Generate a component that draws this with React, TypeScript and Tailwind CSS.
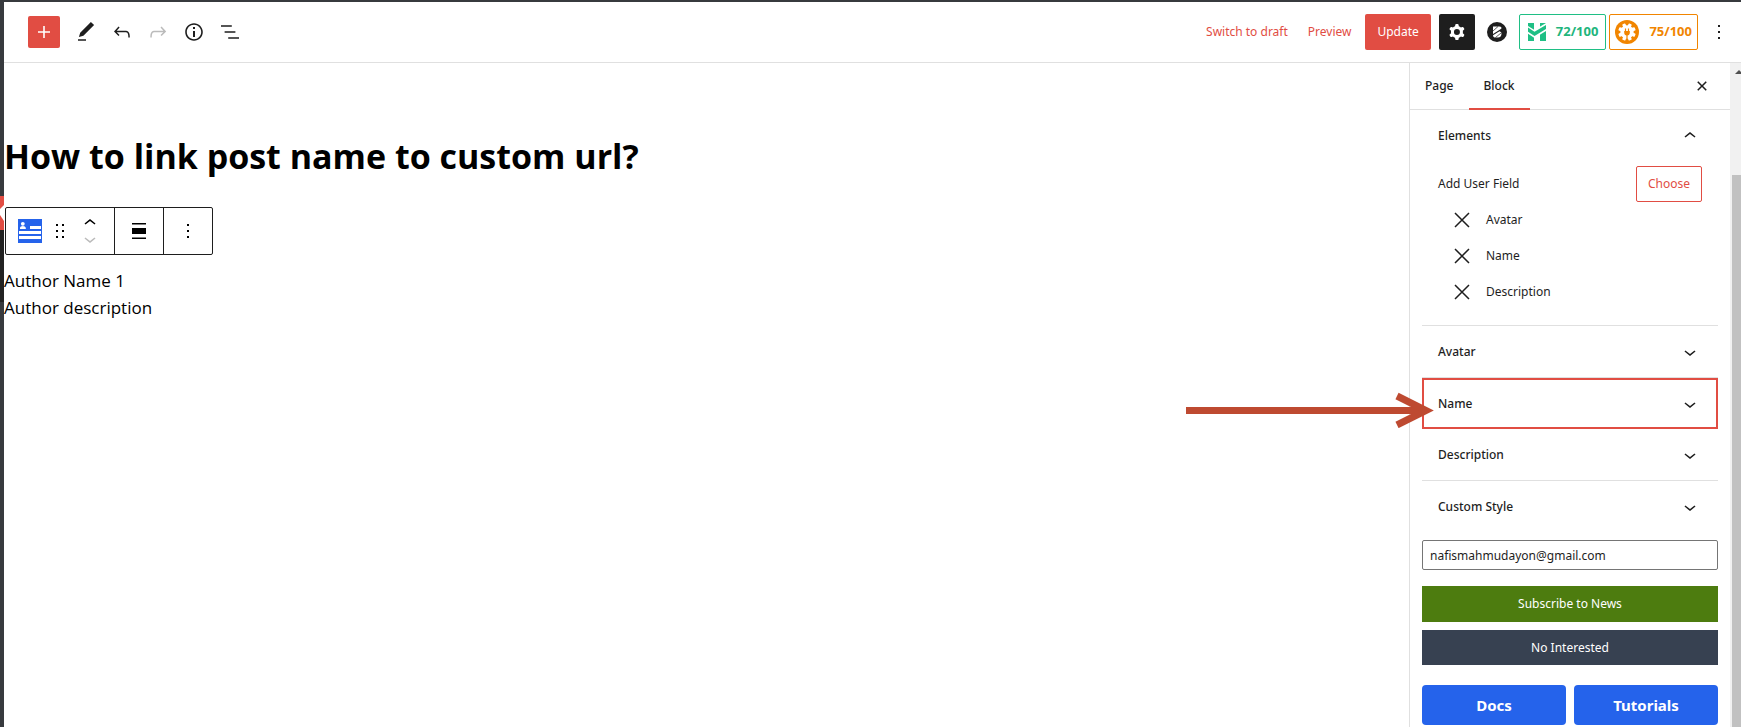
import type { ReactNode } from "react";

const ICONS = {
  plus: "M18 11.2h-5.2V6h-1.6v5.2H6v1.6h5.2V18h1.6v-5.2H18z",
  edit: "M20.1 5.1L16.9 2 6.2 12.7l-1.3 4.4 4.5-1.3L20.1 5.1zM4 20.8h8v-1.5H4v1.5z",
  undo: "M18.3 11.7c-.6-.6-1.4-.9-2.3-.9H6.7l2.9-3.3-1.1-1-4.5 5L8.5 16l1-1-2.7-2.7H16c.5 0 .9.2 1.3.5 1 1 1 3.4 1 4.5v.3h1.5v-.2c0-1.5 0-4.3-1.5-5.7z",
  redo: "M15.6 6.5l-1.1 1 2.9 3.3H8c-.9 0-1.7.3-2.3.9-1.4 1.5-1.4 4.2-1.4 5.6v.2h1.5v-.3c0-1.1 0-3.5 1-4.5.3-.3.7-.5 1.3-.5h9.2L14.5 15l1.1 1.1 4.6-4.6-4.6-5z",
  info: "M12 3.2c-4.8 0-8.8 3.9-8.8 8.8 0 4.8 3.9 8.8 8.8 8.8 4.8 0 8.8-3.9 8.8-8.8 0-4.8-4-8.8-8.8-8.8zm0 16c-4 0-7.2-3.3-7.2-7.2C4.8 8 8 4.8 12 4.8s7.2 3.3 7.2 7.2c0 4-3.2 7.2-7.2 7.2zM11 17h2v-6h-2v6zm0-8h2V7h-2v2z",
  list: "M13.8 5.2H3v1.5h10.8V5.2zm-3.6 12v1.5H21v-1.5H10.2zm7.2-6H6.6v1.5h10.8v-1.5z",
  cog: "M10.289 4.836A1 1 0 0111.275 4h1.306a1 1 0 01.987.836l.244 1.466c.787.26 1.503.679 2.108 1.218l1.393-.522a1 1 0 011.216.437l.653 1.13a1 1 0 01-.23 1.273l-1.148.944a6.025 6.025 0 010 2.435l1.149.946a1 1 0 01.23 1.272l-.653 1.13a1 1 0 01-1.216.437l-1.394-.522c-.605.54-1.32.958-2.108 1.218l-.244 1.466a1 1 0 01-.987.836h-1.306a1 1 0 01-.986-.836l-.244-1.466a5.995 5.995 0 01-2.108-1.218l-1.394.522a1 1 0 01-1.217-.436l-.653-1.131a1 1 0 01.23-1.272l1.149-.946a6.026 6.026 0 010-2.435l-1.148-.944a1 1 0 01-.23-1.272l.653-1.131a1 1 0 011.217-.437l1.393.522a5.994 5.994 0 012.108-1.218l.244-1.466zM14.929 12a3 3 0 11-6 0 3 3 0 016 0z",
  more: "M13 19h-2v-2h2v2zm0-6h-2v-2h2v2zm0-6h-2V5h2v2z",
  close: "M12 13.06l3.712 3.713 1.061-1.06L13.061 12l3.712-3.712-1.06-1.06L12 10.938 8.288 7.227l-1.061 1.06L10.939 12l-3.712 3.712 1.06 1.061L12 13.061z",
  up: "M6.5 12.4L12 8l5.5 4.4-.9 1.2L12 10l-4.5 3.6-1-1.2z",
  down: "M17.5 11.6L12 16l-5.5-4.4.9-1.2L12 14l4.5-3.6 1 1.2z",
  drag: "M8 7h2V5H8v2zm0 6h2v-2H8v2zm0 6h2v-2H8v2zm6-14v2h2V5h-2zm0 8h2v-2h-2v2zm0 6h2v-2h-2v2z",
  align: "M5 4h14v1.6H5zM5 9h14v6H5zM5 18.4h14V20H5z",
};

function Icon({ name, className = "size-6" }: { name: keyof typeof ICONS; className?: string }) {
  return (
    <svg viewBox="0 0 24 24" className={`${className} shrink-0`} fill="currentColor" fillRule="evenodd" aria-hidden="true">
      <path d={ICONS[name]} />
    </svg>
  );
}

function ToolButton({ label, icon, disabled }: { label: string; icon: keyof typeof ICONS; disabled?: boolean }) {
  return (
    <button type="button" aria-label={label} disabled={disabled} className="flex size-9 items-center justify-center text-[#1e1e1e] disabled:text-[#bbb]">
      <Icon name={icon} />
    </button>
  );
}

function BlocksLogo() {
  return (
    <svg viewBox="0 0 20 20" className="size-5" aria-hidden="true">
      <circle cx="10" cy="10" r="10" fill="#1e1e1e" />
      <path d="M6 4.500H12.500Q14.800 4.500 14.300 6.800L6 12Z" fill="#fff" />
      <path d="M6 13.200L12.500 9.200Q14.800 9.800 14.500 12Q14 15.500 11 15.500H7.500Q6 15.200 6 13.200Z" fill="#fff" />
      <path d="M6 9L11 4.500M8.500 15.500L14 11" stroke="#1e1e1e" strokeWidth=".7" />
    </svg>
  );
}

function SeoLogo() {
  return (
    <svg viewBox="0 0 18 18" className="size-[18px]" aria-hidden="true" fill="#1fbf85">
      <path d="M0 0H6V18H0ZM12 0H18V18H12Z" />
      <path d="M-1 2.500L6.500 7L19 -.5V7.500L6.500 15L-1 10Z" fill="#fff" />
      <path d="M0 4.500L6.500 8.800L18 2V6L6.500 13L0 8.800Z" />
    </svg>
  );
}

function PlugLogo() {
  return (
    <svg viewBox="0 0 24 24" className="size-6" aria-hidden="true">
      <circle cx="12" cy="12" r="12" fill="#f18500" />
      <g fill="#fff">
        <circle cx="12" cy="12" r="6.700" />
        {[0, 45, 90, 135].map((angle) => (
          <rect key={angle} x="10.300" y="3.200" width="3.400" height="17.600" rx=".8" transform={`rotate(${angle + 22.5} 12 12)`} />
        ))}
      </g>
      <path d="M10.500 8.500v3M13.500 8.500v3M12 14v7" stroke="#f18500" strokeWidth="1.200" />
      <path d="M9.200 11h5.600v1.500a2.800 3 0 0 1-5.600 0z" fill="#f18500" />
    </svg>
  );
}

function BlockTypeIcon() {
  return (
    <svg viewBox="0 0 24 24" className="size-6" aria-hidden="true">
      <path fill="#2563eb" d="M0 0h24v24H0z" />
      <g fill="#fff">
        <circle cx="4.800" cy="4.800" r="1.900" />
        <path d="M2 10V8.800Q2 7 4.800 7T7.800 8.800V10ZM12 7h11v3H12zM1 12h22v3H1zM1 17h22v3H1z" />
      </g>
    </svg>
  );
}

function Header() {
  return (
    <header className="flex h-[61px] shrink-0 items-center justify-between border-b border-[#e0e0e0] pr-2.5 pl-6">
      <div className="flex items-center">
        <button type="button" aria-label="Toggle block inserter" className="mr-2 flex size-8 items-center justify-center rounded-xs bg-[#e14d43] text-white">
          <Icon name="plus" />
        </button>
        <ToolButton label="Tools" icon="edit" />
        <ToolButton label="Undo" icon="undo" />
        <ToolButton label="Redo" icon="redo" disabled />
        <ToolButton label="Details" icon="info" />
        <ToolButton label="List view" icon="list" />
      </div>
      <div className="flex items-center">
        <button type="button" className="px-2.5 text-[#e14d43]">Switch to draft</button>
        <button type="button" className="mr-1 px-2.5 text-[#e14d43]">Preview</button>
        <button type="button" className="h-9 rounded-xs bg-[#e14d43] px-3 text-white">Update</button>
        <button type="button" aria-label="Settings" className="ml-2 flex size-9 items-center justify-center rounded-xs bg-[#1e1e1e] text-white">
          <Icon name="cog" />
        </button>
        <button type="button" aria-label="Blocks" className="flex w-11 justify-center">
          <BlocksLogo />
        </button>
        <button type="button" className="flex h-9 items-center gap-2.5 rounded-xs border border-[#1fbf85] pr-[7px] pl-2 text-[13px] font-bold text-[#21b57c]">
          <SeoLogo />
          72/100
        </button>
        <button type="button" className="ml-[3px] flex h-9 items-center gap-2.5 rounded-xs border border-[#f18500] px-[5px] text-[13px] font-bold text-[#f18500]">
          <PlugLogo />
          75/100
        </button>
        <button type="button" aria-label="Options" className="ml-[9px]">
          <Icon name="more" />
        </button>
      </div>
    </header>
  );
}

function BlockToolbar() {
  return (
    <div role="toolbar" aria-label="Block tools" className="ml-px flex h-12 w-fit divide-x divide-[#1e1e1e] rounded-xs border border-[#1e1e1e] bg-white">
      <div className="flex items-center px-3">
        <button type="button" aria-label="Author block"><BlockTypeIcon /></button>
        <button type="button" aria-label="Drag" className="ml-1.5"><Icon name="drag" /></button>
        <div className="ml-1.5 flex flex-col">
          <button type="button" aria-label="Move up" className="flex h-4 items-center"><Icon name="up" /></button>
          <button type="button" aria-label="Move down" disabled className="flex h-4 items-center text-[#bbb]"><Icon name="down" /></button>
        </div>
      </div>
      <button type="button" aria-label="Align" className="flex w-[49px] items-center justify-center"><Icon name="align" /></button>
      <button type="button" aria-label="More" className="flex w-12 items-center justify-center"><Icon name="more" /></button>
    </div>
  );
}

function PanelRow({ title, className, children }: { title: string; className: string; children?: ReactNode }) {
  return (
    <div className={`relative ${className}`}>
      <button type="button" aria-expanded="false" className="flex size-full items-center justify-between px-4 font-medium">
        {title}
        <Icon name="down" />
      </button>
      {children}
    </div>
  );
}

function PointerArrow() {
  return (
    <svg viewBox="0 0 248 36" className="pointer-events-none absolute top-3 right-[282px] h-9 w-[248px]" aria-hidden="true">
      <path d="M0 18.500H238" stroke="#be4a31" strokeWidth="7" />
      <path d="M211 4L240 18.500L211 33" fill="none" stroke="#be4a31" strokeWidth="7" strokeMiterlimit="10" />
    </svg>
  );
}

function Sidebar() {
  return (
    <aside className="flex w-[332px] shrink-0 border-l border-[#e0e0e0]">
      <div className="flex min-w-0 flex-1 flex-col">
        <div className="flex h-[47px] shrink-0 items-stretch border-b border-[#e0e0e0] pr-4 font-medium">
          <button type="button" className="px-[15px]">Page</button>
          <button type="button" className="-mb-px border-b-2 border-[#e14d43] px-[15px]">Block</button>
          <button type="button" aria-label="Close settings" className="ml-auto flex items-center"><Icon name="close" /></button>
        </div>
        <div className="flex flex-col px-3">
          <section className="flex h-[216px] flex-col border-b border-[#e0e0e0] px-4">
            <button type="button" aria-expanded="true" className="flex h-[52px] items-center justify-between font-medium">
              Elements
              <Icon name="up" />
            </button>
            <div className="mt-1 flex h-9 items-center justify-between">
              <span>Add User Field</span>
              <button type="button" className="h-9 rounded-xs border border-[#e14d43] px-[11px] text-[#e14d43]">Choose</button>
            </div>
            <ul className="pl-4">
              {["Avatar", "Name", "Description"].map((field) => (
                <li key={field} className="flex h-9 items-center gap-4">
                  <button type="button" aria-label={`Remove ${field}`}>
                    <svg viewBox="0 0 16 16" className="size-4" stroke="#1e1e1e" strokeWidth="1.500" aria-hidden="true">
                      <path d="M1 1l14 14M15 1l-14 14" />
                    </svg>
                  </button>
                  {field}
                </li>
              ))}
            </ul>
          </section>
          <PanelRow title="Avatar" className="h-[52px] border-b border-[#e0e0e0]" />
          <PanelRow title="Name" className="h-[51px] border-2 border-[#e14d43] [&>button]:px-3.5">
            <PointerArrow />
          </PanelRow>
          <PanelRow title="Description" className="h-[52px] border-b border-[#e0e0e0]" />
          <PanelRow title="Custom Style" className="h-[52px]" />
          <input type="email" aria-label="Email address" defaultValue="nafismahmudayon@gmail.com" className="mt-[7px] h-[30px] w-full rounded-xs border border-[#757575] px-[7px] outline-none" />
          <button type="button" className="mt-4 h-9 bg-[#4d7c0f] text-white">Subscribe to News</button>
          <button type="button" className="mt-2 h-[35px] bg-[#374151] text-white">No Interested</button>
          <div className="mt-5 grid grid-cols-2 gap-2 text-center text-[15px] font-bold text-white">
            <a href="#docs" className="rounded-sm bg-[#2563eb] py-2 leading-6">Docs</a>
            <a href="#tutorials" className="rounded-sm bg-[#2563eb] py-2 leading-6">Tutorials</a>
          </div>
        </div>
      </div>
      <div className="flex w-[11px] shrink-0 flex-col overflow-hidden bg-[#f1f1f1] pl-0.5" aria-hidden="true">
        <svg viewBox="0 0 9 17" className="mb-[95px] h-[17px] w-[9px] shrink-0 fill-[#505050]">
          <path d="M3 11L7 7L9 9V11Z" />
        </svg>
        <div className="flex-1 bg-[#c1c1c1]" />
      </div>
    </aside>
  );
}

export default function App() {
  return (
    <div className="flex h-screen overflow-hidden border-t-2 border-[#373a3e] bg-white font-['Noto_Sans','Open_Sans',sans-serif] text-xs text-[#1e1e1e]">
      <div className="flex w-1 shrink-0 flex-col bg-[#373a3e] pt-[194px]" aria-hidden="true">
        <svg viewBox="0 0 4 34" className="h-[34px] w-1 shrink-0">
          <path d="M0 0h4v34H0z" fill="#e14d43" />
          <path d="M4 9v16L0 19V13z" fill="#fff" />
        </svg>
        <div className="h-[72px] bg-[#222]" />
      </div>
      <div className="flex min-w-0 flex-1 flex-col">
        <Header />
        <div className="flex min-h-0 flex-1">
          <main className="min-w-0 flex-1 pt-[68px] font-['Open_Sans','Noto_Sans',sans-serif] text-black">
            <h1 className="text-[34px] leading-[50px] font-bold">How to link post name to custom url?</h1>
            <div className="mt-[26px] mb-3">
              <BlockToolbar />
            </div>
            <p className="text-[17px] leading-[27px]">Author Name 1</p>
            <p className="text-[17px] leading-[27px]">Author description</p>
          </main>
          <Sidebar />
        </div>
      </div>
    </div>
  );
}
